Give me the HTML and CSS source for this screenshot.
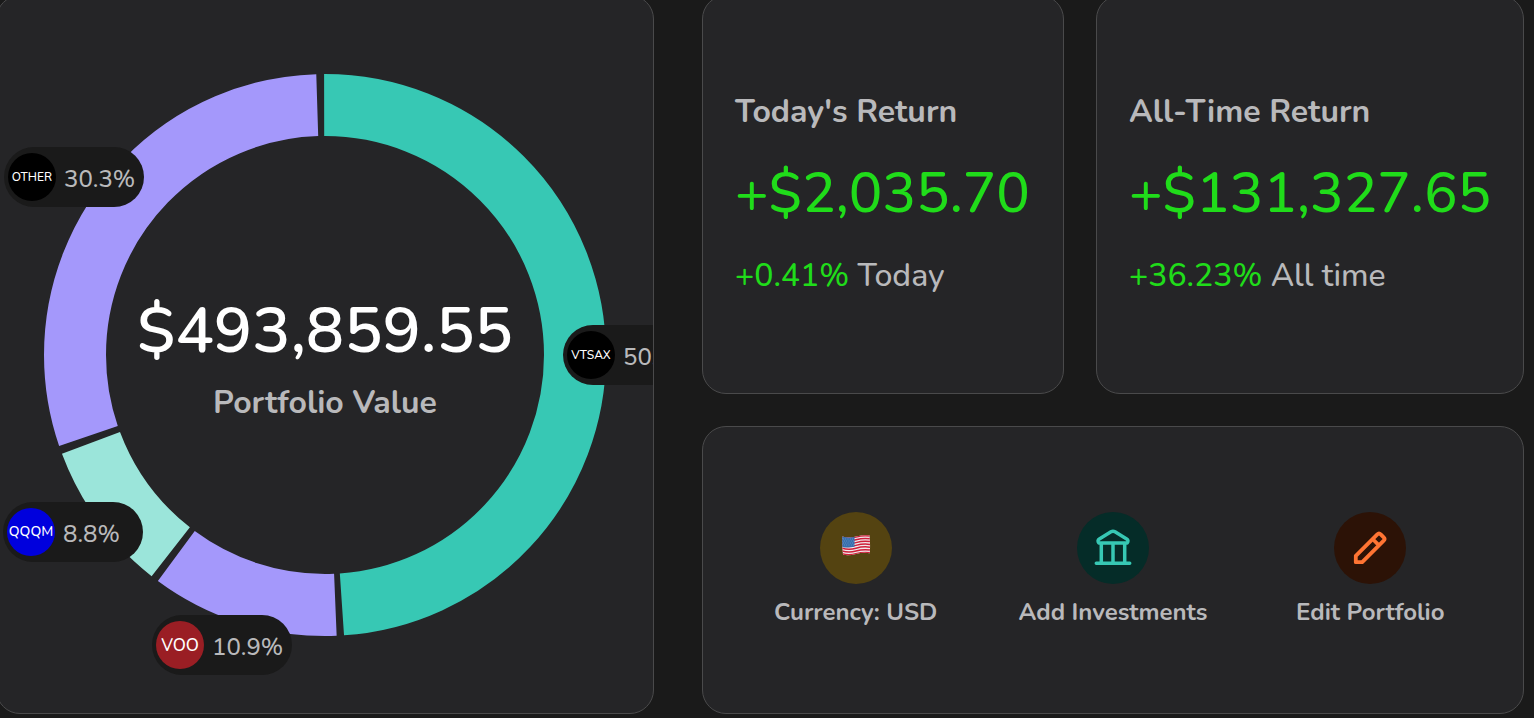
FILE: index.html
```html
<!DOCTYPE html>
<html lang="en">
<head>
<meta charset="utf-8">
<title>Portfolio</title>
<link rel="stylesheet" href="styles.css">
</head>
<body>
<main class="dashboard">
  <section class="card portfolio">
    <div class="chart">
      <svg class="donut" viewBox="0 0 562 562" aria-hidden="true">
        <g fill="none" stroke-width="62" transform="rotate(-90 281 281)">
          <circle class="seg-teal" cx="281" cy="281" r="250" pathLength="3600" stroke-dasharray="1763 1837" stroke-dashoffset="2"/>
          <circle class="seg-purple" cx="281" cy="281" r="250" pathLength="3600" stroke-dasharray="389 3211" stroke-dashoffset="-1776"/>
          <circle class="seg-mint" cx="281" cy="281" r="250" pathLength="3600" stroke-dasharray="313 3287" stroke-dashoffset="-2181"/>
          <circle class="seg-purple" cx="281" cy="281" r="250" pathLength="3600" stroke-dasharray="1071 2529" stroke-dashoffset="-2511"/>
        </g>
      </svg>
      <div class="total">
        <strong class="total-value">$493,859.55</strong>
        <span class="total-label">Portfolio Value</span>
      </div>
      <div class="pill pill-other"><span class="ticker ticker-small">OTHER</span><span class="share">30.3%</span></div>
      <div class="pill pill-vtsax"><span class="ticker ticker-small">VTSAX</span><span class="share">50.0%</span></div>
      <div class="pill pill-qqqm"><span class="ticker ticker-medium">QQQM</span><span class="share">8.8%</span></div>
      <div class="pill pill-voo"><span class="ticker ticker-large">VOO</span><span class="share">10.9%</span></div>
    </div>
  </section>
  <div class="side">
    <section class="card stat">
      <h2 class="stat-title">Today's Return</h2>
      <p class="stat-value">+$2,035.70</p>
      <p class="stat-note"><span class="gain">+0.41%</span> Today</p>
    </section>
    <section class="card stat">
      <h2 class="stat-title">All-Time Return</h2>
      <p class="stat-value">+$131,327.65</p>
      <p class="stat-note"><span class="gain">+36.23%</span> All time</p>
    </section>
    <section class="card actions">
      <button class="action" type="button">
        <span class="badge badge-gold">
          <svg class="icon" viewBox="0 0 40 40" aria-hidden="true">
            <defs><clipPath id="flag"><path d="M6.300 8.500Q13 10.300 20 8.500T33.500 7.300Q34.500 16 33.800 25.300Q27 24 20 26T7 26.800Q5.800 17 6.300 8.500Z"/></clipPath></defs>
            <g clip-path="url(#flag)">
              <path fill="#f1e9ec" d="M4 4h32v26H4z"/>
              <path fill="none" stroke="#cf1f3a" stroke-width="1.500" d="M6 9Q13 11 20 9T34 8M6 11.800Q13 13.800 20 11.800T34 10.800M6 14.600Q13 16.600 20 14.600T34 13.600M6 17.400Q13 19.400 20 17.400T34 16.400M6 20.200Q13 22.200 20 20.200T34 19.200M6 23Q13 25 20 23T34 22M6 25.800Q13 27.800 20 25.800T34 24.800"/>
              <path fill="#376fae" d="M6 8Q12 10 18.500 8.500V18.700Q12 20.200 6 19Z"/>
              <path fill="none" stroke="#86a9cf" stroke-width=".7" stroke-dasharray=".8 1.500" d="M7 11h11M8 13h10M7 15h11M8 17h10"/>
            </g>
          </svg>
        </span>
        Currency: USD
      </button>
      <button class="action" type="button">
        <span class="badge badge-teal">
          <svg class="icon" viewBox="0 0 40 40" fill="none" stroke="currentColor" stroke-width="3.500" stroke-linecap="round" stroke-linejoin="round" aria-hidden="true">
            <path d="M3.300 35.200h33.400M8.300 15v20M20 15v20M31.700 15v20M5.800 15h28.400c1.200-1.500 1-3-.500-4L22 3.800q-2-1.200-4 0L6.300 11c-1.500 1-1.700 2.500-.500 4Z"/>
          </svg>
        </span>
        Add Investments
      </button>
      <button class="action" type="button">
        <span class="badge badge-orange">
          <svg class="icon" viewBox="0 0 40 40" fill="none" stroke="currentColor" stroke-width="3.800" stroke-linejoin="round" aria-hidden="true">
            <path d="M5.800 34.200V27.800L27.300 6.300Q29 4.600 30.700 6.300L33.700 9.300Q35.400 11 33.700 12.700L12.200 34.200ZM22.600 11l6.400 6.400"/>
          </svg>
        </span>
        Edit Portfolio
      </button>
    </section>
  </div>
</main>
</body>
</html>
```
FILE: styles.css
```css
* { box-sizing: border-box; }
body {
  margin: 0;
  height: 100vh;
  overflow: hidden;
  background: #1a1a1a;
  color: #b9b9bb;
  font-family: Nunito, "Noto Sans", sans-serif;
}
.dashboard {
  display: grid;
  grid-template-columns: 658fr 822fr;
  gap: 48px;
  height: calc(100vh + 1px);
  margin: -5px 10px 0 -4px;
}
.card {
  border: 1px solid #4a4a4b;
  border-radius: 24px;
  background: #252527;
}
.portfolio {
  display: grid;
  place-items: center;
  overflow: hidden;
}
.chart {
  position: relative;
  width: 562px;
  height: 562px;
}
.donut { display: block; width: 100%; height: 100%; }
.seg-teal { stroke: #37c8b4; }
.seg-purple { stroke: #a498fb; }
.seg-mint { stroke: #9be5da; }
.total {
  position: absolute;
  inset: 0;
  display: flex;
  flex-direction: column;
  align-items: center;
  justify-content: center;
  padding-top: 8px;
}
.total-value {
  color: #fff;
  font-size: 64px;
  font-weight: 600;
  line-height: 88px;
}
.total-label {
  font-size: 32px;
  font-weight: 700;
  line-height: 56px;
}
.pill {
  position: absolute;
  display: flex;
  align-items: center;
  gap: 8px;
  width: 140px;
  height: 60px;
  padding: 0 4px;
  border-radius: 30px;
  background: #1a1a1a;
  font-size: 24px;
  font-weight: 500;
}
.pill-other { left: -40px; top: 73px; }
.pill-vtsax { left: 519px; top: 251px; }
.pill-qqqm { left: -41px; top: 428px; }
.pill-voo { left: 108px; top: 541px; }
.share { padding-top: 4px; }
.ticker {
  display: grid;
  place-items: center;
  flex: none;
  width: 48px;
  height: 48px;
  border-radius: 50%;
  background: #000;
  color: #fff;
}
.ticker-small { font-size: 12px; }
.ticker-medium { font-size: 14px; }
.ticker-large { padding-top: 2px; font-size: 17px; }
.pill-qqqm .ticker { background: #0000dd; }
.pill-voo .ticker { background: #9a1e24; }
.side {
  display: grid;
  grid-template-columns: 362fr 428fr;
  grid-template-rows: 399fr 288fr;
  gap: 32px;
}
.stat {
  display: flex;
  flex-direction: column;
  justify-content: center;
  gap: 20px;
  min-width: 0;
  padding: 0 32px 2px;
  white-space: nowrap;
}
.stat-title {
  margin: 0;
  font-size: 32px;
  font-weight: 700;
  line-height: 44px;
}
.stat-value {
  margin: 0;
  color: #20dc1a;
  font-size: 56px;
  font-weight: 500;
  line-height: 80px;
}
.stat-note {
  margin: 0;
  font-size: 32px;
  font-weight: 500;
  line-height: 44px;
}
.gain { color: #20dc1a; }
.actions {
  grid-column: 1 / -1;
  display: grid;
  grid-template-columns: repeat(3, 1fr);
  align-items: center;
  padding: 0 24px;
}
.action {
  display: flex;
  flex-direction: column;
  align-items: center;
  gap: 12px;
  padding: 0;
  border: 0;
  background: none;
  color: inherit;
  font: inherit;
  font-size: 24px;
  font-weight: 700;
  line-height: 32px;
}
.badge {
  display: grid;
  place-items: center;
  width: 72px;
  height: 72px;
  border-radius: 50%;
}
.badge-gold { background: #544311; }
.badge-teal { background: #052c28; color: #37c8b4; }
.badge-orange { background: #2c1206; color: #ff7433; }
.icon { display: block; width: 40px; height: 40px; }
```
